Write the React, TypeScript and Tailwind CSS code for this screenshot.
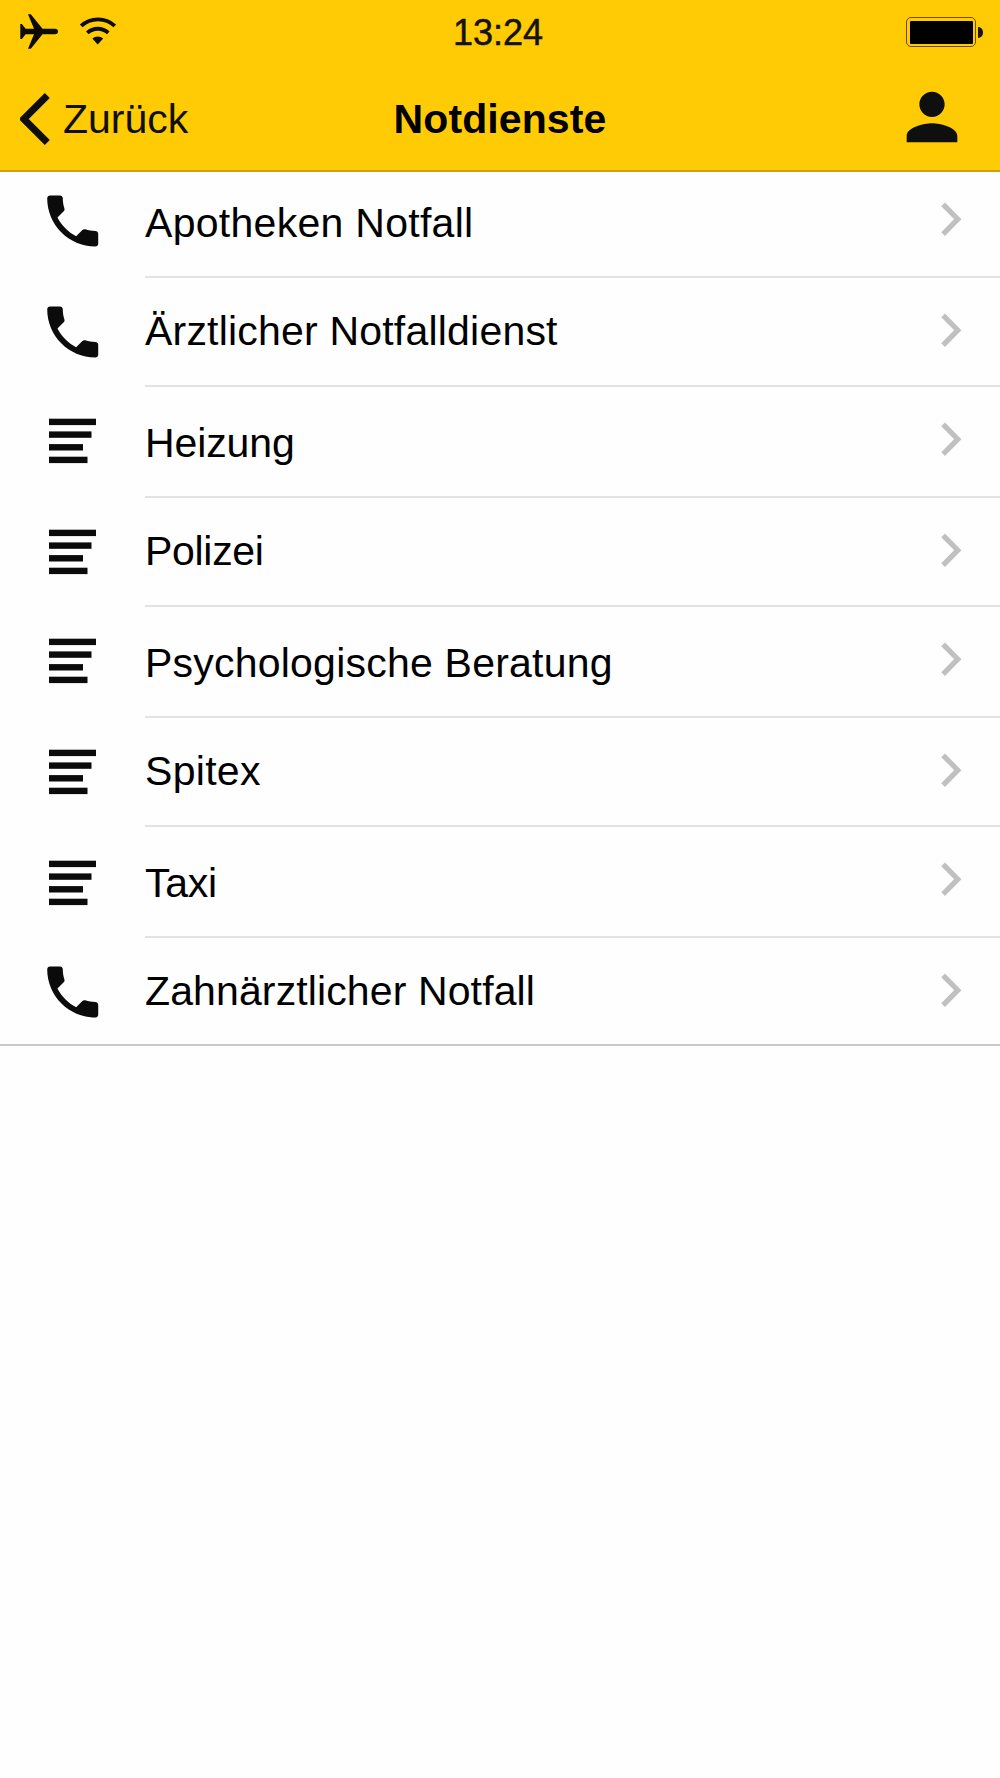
import { MdPerson } from 'react-icons/md';

type IconName = 'phone' | 'list';

interface Entry {
  label: string;
  icon: IconName;
  // rows alternate between two heights, text sits a little lower in the tall ones
  row: string;
  iconPad?: string;
  text: string;
}

const entries: Entry[] = [
  { label: 'Apotheken Notfall', icon: 'phone', row: '-mt-[5px] h-[111px]', text: 'pt-[32px] tracking-[0.28px]' },
  { label: 'Ärztlicher Notfalldienst', icon: 'phone', row: 'h-[109px]', text: 'pt-[29px] tracking-[0.2px]' },
  { label: 'Heizung', icon: 'list', row: 'h-[111px]', text: 'pt-[32px] tracking-[-0.1px]' },
  { label: 'Polizei', icon: 'list', row: 'h-[109px]', text: 'pt-[29px] tracking-[-0.3px]' },
  { label: 'Psychologische Beratung', icon: 'list', row: 'h-[111px]', text: 'pt-[32px] tracking-[0.22px]' },
  { label: 'Spitex', icon: 'list', row: 'h-[109px]', text: 'pt-[29px] tracking-[0.3px]' },
  { label: 'Taxi', icon: 'list', row: 'h-[111px]', iconPad: 'pt-[22px]', text: 'pt-[32px] tracking-[-0.3px]' },
  { label: 'Zahnärztlicher Notfall', icon: 'phone', row: 'h-[106px]', text: 'pt-[29px] tracking-[0.12px]' },
];

function PhoneIcon() {
  return (
    <svg width="68" height="68" viewBox="0.1 0 24 24" className="ml-[39px]" fill="#0b0b0b">
      <path d="M6.62 10.79c1.44 2.83 3.76 5.14 6.59 6.59l2.2-2.2c.27-.27.67-.36 1.02-.24 1.12.37 2.33.57 3.57.57.55 0 1 .45 1 1V20c0 .55-.45 1-1 1-9.39 0-17-7.61-17-17 0-.55.45-1 1-1h3.5c.55 0 1 .45 1 1 0 1.25.2 2.45.57 3.57.11.35.03.74-.25 1.02l-2.2 2.2z" />
    </svg>
  );
}

function ListIcon() {
  return (
    <svg width="47" height="46" viewBox="0 0 47 46" className="ml-[49px] mt-[11px]" fill="#0b0b0b">
      <rect y="0.7" width="47" height="6.4" />
      <rect y="13.4" width="42.5" height="6.4" />
      <rect y="26.1" width="34" height="6.4" />
      <rect y="38.7" width="38.5" height="6.4" />
    </svg>
  );
}

function Chevron() {
  return (
    <svg width="21" height="34" viewBox="0 0 21 34" fill="none" stroke="#c0c0c0" strokeWidth="5.2">
      <path d="M2.1 2.3 16.8 17.2 2.1 32.1" />
    </svg>
  );
}

function StatusBar() {
  return (
    <div className="grid h-[66px] grid-cols-3 items-start px-[17px]">
      <div className="flex gap-[21px] pl-[3px] pt-[14px]">
        <svg width="38" height="35" viewBox="0 0 38 35" fill="#0b0b00">
          <path d="M.3 10h1.6l3.7 4.7H14L8 .3h2.8l11.7 14.4H35c4 0 4 5.6 0 5.6H22.5L10.8 34.7H8L14 20.3H5.6L1.9 25H.3z" />
        </svg>
        <svg width="37" height="28" viewBox="0 0 37 28" className="mt-[3px]" fill="none" stroke="#0b0b00" strokeWidth="3.8">
          <path d="M2.2 8.9C11.5.1 26.5.1 35.8 8.9" />
          <path d="M8.3 15.8c6-5.4 15-5.4 21 0" />
          <path d="M13.3 21.5c3.200-2.8 7.7-2.8 10.9 0l-5.500 6z" fill="#0b0b00" stroke="none" />
        </svg>
      </div>
      <div className="-ml-1 pt-[12px] text-center text-[36px] leading-[42px] text-[#141200] [-webkit-text-stroke:0.5px_#141200]">
        13:24
      </div>
      <div className="flex items-center justify-end gap-[2px] pt-[17px]">
        <div className="h-[30px] w-[70px] rounded-[5px] border border-[#6f4d00] p-[2.5px]">
          <div className="h-full w-full rounded-[1px] bg-black" />
        </div>
        <div className="h-[11px] w-[5px] rounded-r-full bg-[#1a1600]" />
      </div>
    </div>
  );
}

function NavBar() {
  return (
    <div className="grid h-[104px] grid-cols-3 items-start px-5">
      <div className="flex gap-[13px] text-[#101000]">
        <svg width="30" height="52" viewBox="0 0 30 52" className="mt-[27px]" fill="none" stroke="#0e0e0e" strokeWidth="7">
          <path d="M27.3 2.5 3.8 26l23.5 23.5" />
        </svg>
        <span className="pt-[29px] text-[41px] leading-[48px]">Zurück</span>
      </div>
      <div className="pt-[29px] text-center text-[41px] font-bold leading-[48px] tracking-[0.1px] text-black">Notdienste</div>
      <div className="flex justify-end pr-[10px] pt-[13px]">
        <MdPerson className="size-[76px] text-[#0f0f0f]" />
      </div>
    </div>
  );
}

export default function App() {
  return (
    <div className="h-[1778px] w-[1000px] overflow-hidden bg-[#fefefe] font-['Liberation_Sans',Arial,sans-serif]">
      <header className="h-[172px] border-b-2 border-[#c9a10a] bg-[#ffcb05]">
        <StatusBar />
        <NavBar />
      </header>
      <ul className="border-b-2 border-[#c8c7cc]">
        {entries.map((entry, i) => (
          <li key={entry.label} className={`flex ${entry.row}`}>
            <div className={`w-[145px] shrink-0 ${entry.iconPad ?? 'pt-[20px]'}`}>
              {entry.icon === 'phone' ? <PhoneIcon /> : <ListIcon />}
            </div>
            <div
              className={`flex flex-1 items-start justify-between pr-[38px] ${
                i < entries.length - 1 ? 'border-b-2 border-[#e2e2e2]' : ''
              }`}
            >
              <span className={`text-[41px] leading-[48px] text-black ${entry.text}`}>{entry.label}</span>
              <div className="pt-[35px]">
                <Chevron />
              </div>
            </div>
          </li>
        ))}
      </ul>
    </div>
  );
}
